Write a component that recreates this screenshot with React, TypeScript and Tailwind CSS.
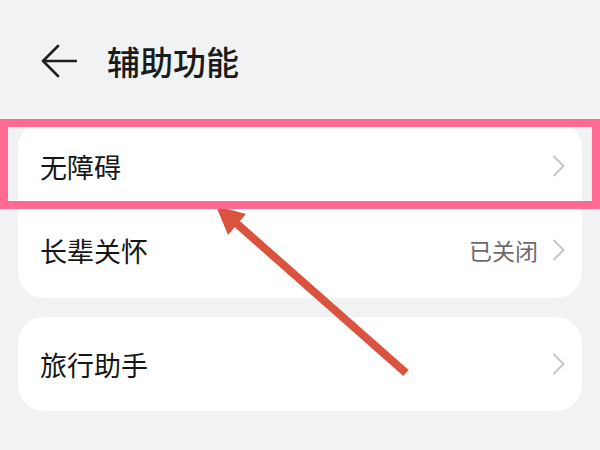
import React from "react";

const Chevron = () => (
  <svg width="14" height="22" viewBox="0 0 14 22" className="shrink-0">
    <path d="M2 1.5 L11.5 11 L2 20.5" fill="none" stroke="#c6c6c8" strokeWidth="2" strokeLinecap="round" strokeLinejoin="round" />
  </svg>
);

function Row({ label, value, h }: { label: string; value?: string; h: string }) {
  return (
    <div className={`flex items-center justify-between pl-[22px] pr-[16px] ${h}`}>
      <span className="text-[27px] leading-none text-[#161616]">{label}</span>
      <div className="flex items-center gap-[14px]">
        {value && <span className="text-[23px] leading-none text-[#6b6b6b]">{value}</span>}
        <Chevron />
      </div>
    </div>
  );
}

export default function App() {
  return (
    <div
      className="relative w-[600px] h-[450px] overflow-hidden bg-[#f1f2f4]"
      style={{ fontFamily: '"Noto Sans CJK SC", "Noto Sans", sans-serif' }}
    >
      <div className="flex items-center h-[122px] pl-[41px]">
        <svg width="36" height="34" viewBox="0 0 36 34" className="shrink-0">
          <path d="M17 2 L2 17 L17 32 M2 17 H35" fill="none" stroke="#1f1f1f" strokeWidth="2.6" strokeLinecap="round" strokeLinejoin="round" />
        </svg>
        <span className="ml-[30px] text-[33px] font-medium leading-none text-[#1a1a1a]">辅助功能</span>
      </div>

      <div className="mx-[18px] rounded-[26px] bg-white pt-[2px] pb-[6px]">
        <Row label="无障碍" h="h-[84px]" />
        <Row label="长辈关怀" value="已关闭" h="h-[84px]" />
      </div>

      <div className="mx-[18px] mt-[19px] rounded-[26px] bg-white">
        <Row label="旅行助手" h="h-[94px]" />
      </div>

      {/* annotation arrow */}
      <svg className="absolute left-0 top-0 pointer-events-none" width="600" height="450" viewBox="0 0 600 450">
        <line x1="236" y1="223" x2="406" y2="373" stroke="#d9533f" strokeWidth="8" />
        <polygon points="216,206 246,214 228,235" fill="#d9533f" />
      </svg>

      {/* highlight box */}
      <div className="absolute left-0 top-[119px] w-[600px] h-[90px] border-[8px] border-[#fe6a91]" />
    </div>
  );
}
